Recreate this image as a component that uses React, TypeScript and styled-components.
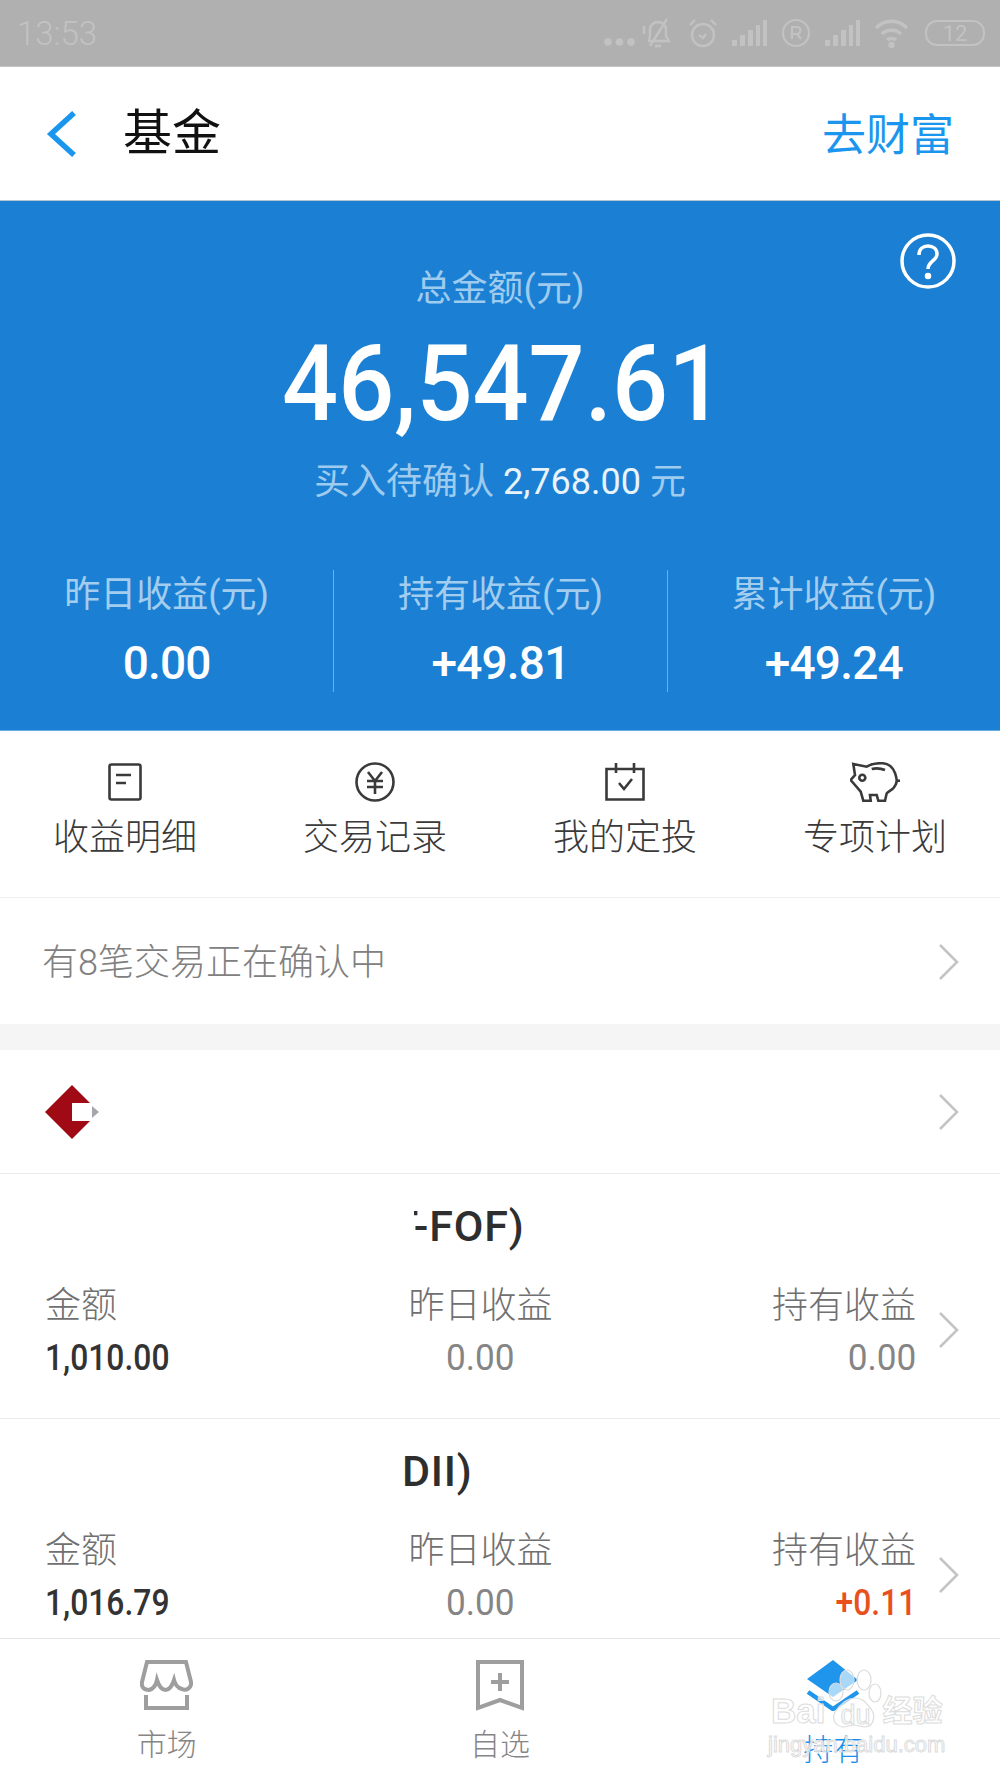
import React from "react"
import styled, { createGlobalStyle } from "styled-components"

const CJK = `Roboto, "Noto Sans CJK SC", sans-serif`

const GlobalStyle = createGlobalStyle`
  html, body { margin: 0; padding: 0; background: #fff; }
  * { box-sizing: border-box; }
  body { font-family: ${CJK}; }
`

const Page = styled.div`
  position: relative;
  width: 1000px;
  height: 1778px;
  display: flex;
  flex-direction: column;
  overflow: hidden;
  background: #fff;
`

const StatusBar = styled.div`
  height: 67px;
  flex: none;
  background: #b0b0b0;
  border-bottom: 1px solid #c4c4c4;
  display: flex;
  align-items: center;
  justify-content: space-between;
  padding: 0 15px 0 17px;
  color: #c2c2c2;
`

const Clock = styled.span`
  font-size: 33px;
  font-weight: 300;
`

const StatusIcons = styled.div`
  display: flex;
  align-items: center;
  gap: 14px;
  svg { display: block; }
`

const Dots = styled.svg`
  margin-right: -8px;
`

const Battery = styled.span`
  width: 60px;
  height: 26px;
  margin-left: 2px;
  border: 2px solid #c2c2c2;
  border-radius: 12px;
  font-size: 22px;
  display: flex;
  align-items: center;
  justify-content: center;
`

const Header = styled.header`
  height: 134px;
  flex: none;
  display: flex;
  align-items: center;
  padding: 0 46px;
  border-bottom: 1px solid #b9c4cf;
`

const Title = styled.h1`
  margin: 0 0 10px 47px;
  font-size: 49px;
  font-weight: 400;
  color: #111;
  flex: 1;
`

const HeaderLink = styled.a`
  font-size: 44px;
  margin-bottom: 3px;
  color: #1a96ef;
`

const Summary = styled.section`
  position: relative;
  height: 530px;
  flex: none;
  background: #1b80d3;
  display: flex;
  flex-direction: column;
  align-items: center;
  padding-top: 66px;
  border-bottom: 1px solid #63ace6;
`

const HelpIcon = styled.svg`
  position: absolute;
  top: 32px;
  right: 44px;
`

const TotalLabel = styled.div`
  font-size: 36px;
  line-height: 44px;
  color: #9fcbef;
`

const Total = styled.div`
  font-size: 105px;
  font-weight: 500;
  line-height: 120px;
  color: #fff;
  margin: 14px 0 0 6px;
  transform: scaleX(0.94);
`

const Pending = styled.div`
  font-size: 36px;
  line-height: 44px;
  margin-top: 15px;
  color: #9fcbef;
  b { font-weight: 400; color: #e8f3fb; }
`

const Stats = styled.div`
  display: grid;
  grid-template-columns: repeat(3, 1fr);
  width: 100%;
  margin-top: 66px;
`

const Stat = styled.div<{ $divider?: boolean }>`
  height: 122px;
  display: flex;
  flex-direction: column;
  align-items: center;
  border-left: ${p => (p.$divider ? "1px solid #6cb0e6" : "none")};
`

const StatLabel = styled.div`
  font-size: 36px;
  line-height: 48px;
  padding-top: 1px;
  box-sizing: content-box;
  color: #a3cdef;
`

const StatValue = styled.div`
  font-size: 46px;
  font-weight: 500;
  line-height: 60px;
  margin-top: 14px;
  letter-spacing: -0.8px;
  color: #fff;
`

const Actions = styled.nav`
  height: 167px;
  flex: none;
  display: grid;
  grid-template-columns: repeat(4, 250px);
  border-bottom: 1px solid #eee;
`

const Action = styled.div`
  display: flex;
  flex-direction: column;
  align-items: center;
  padding-top: 31px;
  color: #3a3a3a;
`

const ActionIcon = styled.div`
  height: 40px;
  display: flex;
  align-items: center;
  svg { display: block; }
`

const ActionLabel = styled.span`
  font-size: 36px;
  font-weight: 300;
  line-height: 48px;
  margin-top: 12px;
`

const Row = styled.div<{ $h: number; $flat?: boolean }>`
  height: ${p => p.$h}px;
  flex: none;
  display: flex;
  align-items: center;
  justify-content: space-between;
  padding: 0 40px 0 42px;
  border-bottom: ${p => (p.$flat ? "none" : "1px solid #eaeaea")};
`

const ConfirmText = styled.span`
  font-size: 36px;
  font-weight: 300;
  color: #808080;
  margin-bottom: 5px;
`

const Band = styled.div`
  height: 26px;
  flex: none;
  background: #f5f5f5;
`

const Logo = styled.svg`
  display: block;
  margin-left: 3px;
`

const ChevronMark = styled.svg<{ $nudge?: number }>`
  display: block;
  flex: none;
  margin-top: ${p => p.$nudge ?? 0}px;
`

const Fund = styled.article`
  height: 245px;
  flex: none;
  position: relative;
  padding: 0 40px 0 45px;
  border-bottom: 1px solid #eaeaea;
`

const FundName = styled.div<{ $left: number }>`
  font-size: 43px;
  font-weight: 500;
  line-height: 56px;
  letter-spacing: 0.8px;
  color: #2e2e2e;
  padding: 24px 0 0 ${p => p.$left}px;
`

/* the reference hides the start of the fund name under a white patch */
const NameMask = styled.div<{ $w: number }>`
  position: absolute;
  left: 0;
  top: 18px;
  height: 64px;
  width: ${p => p.$w}px;
  background: #fff;
`

const FundBody = styled.div`
  display: flex;
  align-items: center;
  margin-top: 28px;
`

const FundCols = styled.div`
  flex: 1;
  display: grid;
  grid-template-columns: 1fr 1fr 1fr;
  margin-right: 22px;
`

const Col = styled.div<{ $align: "left" | "center" | "right" }>`
  text-align: ${p => p.$align};
`

const ColLabel = styled.div`
  font-size: 36px;
  font-weight: 300;
  line-height: 48px;
  color: #707070;
`

const ColValue = styled.div<{ $tone?: "dark" | "up"; $origin: string }>`
  font-size: 37px;
  font-weight: ${p => (p.$tone ? 500 : 400)};
  line-height: 46px;
  margin-top: 5px;
  transform: scaleX(${p => (p.$tone ? 0.86 : 0.95)});
  transform-origin: ${p => p.$origin};
  color: ${p => (p.$tone === "dark" ? "#333" : p.$tone === "up" ? "#e8501e" : "#858585")};
`

const TabBar = styled.footer`
  position: absolute;
  left: 0;
  right: 0;
  bottom: 0;
  height: 140px;
  background: #fff;
  border-top: 1px solid #e6e6e6;
  display: grid;
  grid-template-columns: repeat(3, 1fr);
`

const Tab = styled.div<{ $active?: boolean }>`
  display: flex;
  flex-direction: column;
  align-items: center;
  padding-top: 21px;
  color: ${p => (p.$active ? "#1a8eea" : "#9e9e9e")};
  svg { display: block; }
`

const TabLabel = styled.span<{ $active?: boolean }>`
  font-size: 30px;
  font-weight: 300;
  line-height: 38px;
  margin-top: ${p => (p.$active ? 20 : 15)}px;
  color: ${p => (p.$active ? "#1a8eea" : "#858585")};
`

const Watermark = styled.div`
  position: absolute;
  left: 771px;
  top: 1665px;
  width: 180px;
  pointer-events: none;
  font-family: "Liberation Sans", "Noto Sans CJK SC", sans-serif;
  color: rgba(255, 255, 255, 0.7);
  -webkit-text-stroke: 1px #dcdcdc;
`

const WatermarkLogo = styled.div`
  display: flex;
  align-items: flex-end;
  height: 64px;
`

const WatermarkWord = styled.span<{ $size: number }>`
  font-size: ${p => p.$size}px;
  font-weight: 700;
  line-height: 36px;
  white-space: nowrap;
`

const Paw = styled.div`
  position: relative;
  width: 57px;
  height: 64px;
  svg { display: block; }
`

const PawText = styled.span`
  position: absolute;
  left: 15px;
  top: 36px;
  font-size: 27px;
  line-height: 28px;
  font-weight: 400;
`

const WatermarkUrl = styled.div`
  font-size: 22px;
  line-height: 24px;
  margin: 4px 0 0 -3px;
  white-space: nowrap;
`

const Chevron: React.FC<{ nudge?: number }> = ({ nudge }) => (
  <ChevronMark $nudge={nudge} width="22" height="38" viewBox="0 0 22 38" fill="none" stroke="#c4c4c4" strokeWidth="2.6">
    <path d="M2 2l17 17L2 36" />
  </ChevronMark>
)

const Signal = () => (
  <svg width="35" height="26" viewBox="0 0 35 26" fill="#c2c2c2">
    <path d="M0 20h5v6H0zM8 15h5v11H8zM16 10h5v16h-5zM24 5h4v21h-4zM31 0h4v26h-4z" />
  </svg>
)

const StatusGlyphs = () => (
  <StatusIcons>
    <Dots width="32" height="30" viewBox="0 0 32 30" fill="#c2c2c2"><circle cx="4" cy="24" r="3.8" /><circle cx="15.500" cy="24" r="3.800" /><circle cx="27" cy="24" r="3.800" /></Dots>
    <svg width="32" height="30" viewBox="0 0 32 30" fill="none" stroke="#c2c2c2" strokeWidth="2.4"><path d="M7 23h20l-3-5v-7c0-4-4-7-8-7s-8 3-8 7v7zM13 28h6M25 1L8 28M2 8v8" /></svg>
    <svg width="30" height="30" viewBox="0 0 30 30" fill="none" stroke="#c2c2c2" strokeWidth="2.4"><circle cx="15" cy="17" r="11" /><path d="M11 17l4 3 3-4M2 7l5-5M28 7l-5-5" /></svg>
    <Signal />
    <svg width="30" height="30" viewBox="0 0 30 30" fill="none" stroke="#c2c2c2" strokeWidth="2.2"><circle cx="15" cy="15" r="13" /><path d="M11 21V9h5a3.500 3.500 0 010 7h-5M16 16l4 5" /></svg>
    <Signal />
    <svg width="35" height="30" viewBox="0 0 35 30" fill="none" stroke="#c2c2c2" strokeWidth="3.4"><path d="M2 10c9-9 22-9 31 0M8 16c5-5 14-5 19 0M13 22c2-2 7-2 9 0" /><circle cx="17.500" cy="27" r="1.500" fill="#c2c2c2" /></svg>
    <Battery>12</Battery>
  </StatusIcons>
)

const actions = [
  {
    label: "收益明细",
    icon: <svg width="34" height="38" viewBox="0 0 34 38" fill="none" stroke="currentColor" strokeWidth="2.6"><rect x="1.500" y="1.500" width="31" height="35" rx="2" /><path d="M8 12h15M8 20h10" /></svg>,
  },
  {
    label: "交易记录",
    icon: <svg width="40" height="40" viewBox="0 0 40 40" fill="none" stroke="currentColor" strokeWidth="2.6"><circle cx="20" cy="20" r="18.500" /><path d="M13 10l7 9 7-9M12 19h16M12 25h16M20 19v13" /></svg>,
  },
  {
    label: "我的定投",
    icon: <svg width="40" height="38" viewBox="0 0 40 38" fill="none" stroke="currentColor" strokeWidth="2.6"><path d="M1.500 6h37v30.500h-37zM11 0v10M29 0v10M14 20l5 6 8-10" /></svg>,
  },
  {
    label: "专项计划",
    icon: <svg width="50" height="40" viewBox="0 0 50 40" fill="none" stroke="currentColor" strokeWidth="2.6"><path d="M3.300 2l13.400 2.700C22 1.500 28 1 33 1.300c6 .5 10 4.500 12 9.700.8 2.500 1.700 5 1.700 7.700 0 2.300-1 4.300-3 7-2 2.500-5 3.500-7 5.600L35 38.700h-6.700L26.700 33H20l.7 5.700h-7.400l-2.600-9L5 23 .7 18 5 13z" /><path d="M46.700 18.700H50" /><circle cx="12.300" cy="15.700" r="3" /><path d="M21.700 7c4-1 9-.8 13.300 1" /></svg>,
  },
]

const funds = [
  { id: 1, name: "T-FOF)", left: 347, mask: 414, amount: "1,010.00", held: "0.00", up: false },
  { id: 2, name: "DII)", left: 357, mask: 0, amount: "1,016.79", held: "+0.11", up: true },
]

const App: React.FC = () => {
  return (
    <Page>
      <GlobalStyle />
      <StatusBar>
        <Clock>13:53</Clock>
        <StatusGlyphs />
      </StatusBar>

      <Header>
        <svg width="30" height="46" viewBox="0 0 30 46" fill="none" stroke="#1a96ef" strokeWidth="5.500">
          <path d="M28 2L5 23l23 21" />
        </svg>
        <Title>基金</Title>
        <HeaderLink>去财富</HeaderLink>
      </Header>

      <Summary>
        <HelpIcon width="56" height="56" viewBox="0 0 56 56" fill="none" stroke="#fff" strokeWidth="3.500">
          <circle cx="28" cy="28" r="26" />
          <path d="M19 22c0-6 4-9 9-9s9 3 9 8c0 7-9 7-9 15" />
          <circle cx="28" cy="43" r="1.500" fill="#fff" />
        </HelpIcon>
        <TotalLabel>总金额(元)</TotalLabel>
        <Total>46,547.61</Total>
        <Pending>买入待确认 <b>2,768.00</b> 元</Pending>
        <Stats>
          <Stat>
            <StatLabel>昨日收益(元)</StatLabel>
            <StatValue>0.00</StatValue>
          </Stat>
          <Stat $divider>
            <StatLabel>持有收益(元)</StatLabel>
            <StatValue>+49.81</StatValue>
          </Stat>
          <Stat $divider>
            <StatLabel>累计收益(元)</StatLabel>
            <StatValue>+49.24</StatValue>
          </Stat>
        </Stats>
      </Summary>

      <Actions>
        {actions.map(a => (
          <Action key={a.label}>
            <ActionIcon>{a.icon}</ActionIcon>
            <ActionLabel>{a.label}</ActionLabel>
          </Action>
        ))}
      </Actions>

      <Row $h={126} $flat>
        <ConfirmText>有8笔交易正在确认中</ConfirmText>
        <Chevron nudge={2} />
      </Row>
      <Band />
      <Row $h={124}>
        <Logo width="54" height="54" viewBox="0 0 54 54">
          <path d="M27 0l27 27-27 27L0 27z" fill="#a00a14" />
          <path d="M27 18h27v18H27z" fill="#fff" />
          <path d="M47 21l7 6-7 6z" fill="#a5a8ad" />
        </Logo>
        <Chevron />
      </Row>

      {funds.map(f => (
        <Fund key={f.id}>
          <FundName $left={f.left}>{f.name}</FundName>
          {f.mask > 0 && <NameMask $w={f.mask} />}
          <FundBody>
            <FundCols>
              <Col $align="left">
                <ColLabel>金额</ColLabel>
                <ColValue $tone="dark" $origin="left">{f.amount}</ColValue>
              </Col>
              <Col $align="center">
                <ColLabel>昨日收益</ColLabel>
                <ColValue $origin="center">0.00</ColValue>
              </Col>
              <Col $align="right">
                <ColLabel>持有收益</ColLabel>
                <ColValue $tone={f.up ? "up" : undefined} $origin="right">{f.held}</ColValue>
              </Col>
            </FundCols>
            <Chevron nudge={-3} />
          </FundBody>
        </Fund>
      ))}

      <TabBar>
        <Tab>
          <svg width="53" height="51" viewBox="0 0 53 51" fill="none" stroke="currentColor" strokeWidth="4">
            <path d="M7 2H46L51 22C52 28 46 31 42 29C38 28 35 24 34 20C32 26 29 30 25.500 30C22 30 19 26 17 20C16 25 13 29 9 30C4 30 1 27 2 22Z" />
            <path d="M6 35V48H47V35" />
          </svg>
          <TabLabel>市场</TabLabel>
        </Tab>
        <Tab>
          <svg width="48" height="51" viewBox="0 0 48 51" fill="none" stroke="currentColor" strokeWidth="4">
            <path d="M2 2h44v46l-22-8-22 8z" />
            <path d="M24 13v18M15 22h18" />
          </svg>
          <TabLabel>自选</TabLabel>
        </Tab>
        <Tab $active>
          <svg width="54" height="51" viewBox="0 0 54 51" fill="none">
            <path d="M27 0l25 20-25 17L1 19z" fill="#1f95ec" />
            <path d="M2 32l25 17 25-17" stroke="#1f95ec" strokeWidth="4.500" />
          </svg>
          <TabLabel $active>持有</TabLabel>
        </Tab>
      </TabBar>

      <Watermark>
        <WatermarkLogo>
          <WatermarkWord $size={35}>Bai</WatermarkWord>
          <Paw>
            <svg width="57" height="64" viewBox="0 0 57 64" fill="rgba(255,255,255,.62)" stroke="#dcdcdc" strokeWidth="1.200">
              <ellipse cx="11" cy="27" rx="7" ry="9" />
              <ellipse cx="22" cy="15" rx="7" ry="10" />
              <ellipse cx="39" cy="15" rx="7" ry="10" />
              <ellipse cx="50" cy="28" rx="6" ry="9" />
              <path d="M30 33c8 0 11 5 16 11 5 7 3 17-6 18-4 0-7-2-11-2s-7 2-11 2c-9-1-11-9-8-15 4-6 11-14 20-14z" />
            </svg>
            <PawText>du</PawText>
          </Paw>
          <WatermarkWord $size={30}>经验</WatermarkWord>
        </WatermarkLogo>
        <WatermarkUrl>jingyan.baidu.com</WatermarkUrl>
      </Watermark>
    </Page>
  )
}

export default App
